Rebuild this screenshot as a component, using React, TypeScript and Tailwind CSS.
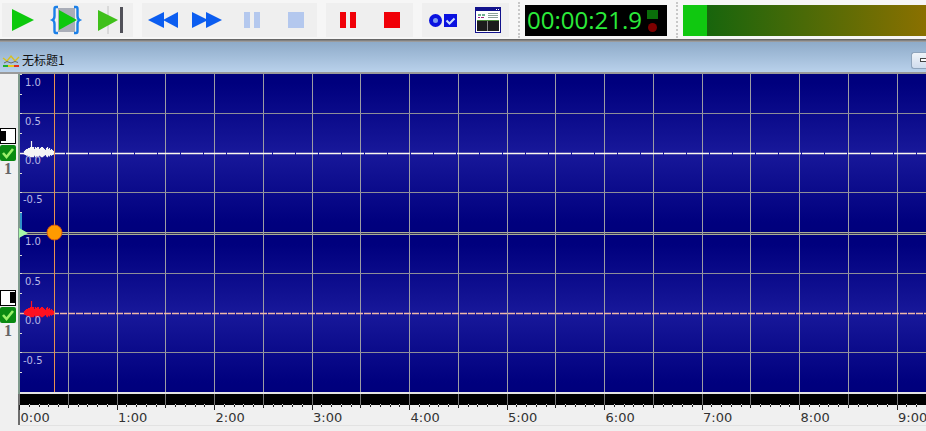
const FONT = '"DejaVu Sans", sans-serif';

const toX = (i: number) => 48.75 * i;
const gridCols = Array.from({ length: 19 }, (_, i) => i + 1);
const rulerTicks = Array.from({ length: 95 }, (_, i) => i);
const minutes = Array.from({ length: 10 }, (_, i) => i);

// rough shape of the short recorded bit at the start of each channel
const peaks = [2, 3, 4, 4, 5, 5, 6, 12, 6, 6, 4, 6, 5, 6, 6, 4, 5, 6, 6, 5, 4, 3, 5, 6, 4, 5, 3, 4, 3, 2];
const wavePath = (mid: number) =>
  peaks.map((p, i) => `M${6.5 + i} ${mid - p}V${mid + Math.min(p, 6) * 0.7}`).join("");

function Group({ children, w }: { children: React.ReactNode; w: string }) {
  return <div className={`h-[34px] bg-[#efefef] flex items-center ${w}`}>{children}</div>;
}

function Dots() {
  return <div className="h-[36px] w-0 border-l-2 border-dotted border-[#c8c8c8]" />;
}

function Icon({ w, children }: { w: number; children: React.ReactNode }) {
  return (
    <svg width={w} height={34} viewBox={`0 0 ${w} 34`} className="shrink-0">
      {children}
    </svg>
  );
}

function ChannelSide({ flip }: { flip?: boolean }) {
  return (
    <div className={`h-[160px] flex flex-col items-start gap-px ${flip ? "pt-[56px]" : "pt-[54px]"}`}>
      <div className="w-[16px] h-[16px] bg-white border border-black flex">
        {flip ? <div className="ml-auto w-[5px] h-[11px] mt-px bg-black" /> : <div className="w-[5px] h-[10px] mt-[2px] bg-black" />}
      </div>
      <svg width={16} height={16} viewBox="0 0 16 16">
        <rect width={16} height={16} rx={2} fill="#0a8a12" />
        <path d="M3 8l3.5 4L13 4" fill="none" stroke="#9cf06a" strokeWidth={2.6} />
      </svg>
      <div className="w-[16px] text-center text-[16px] leading-[14px] font-bold text-[#666]" style={{ fontFamily: '"Liberation Serif", serif' }}>
        1
      </div>
    </div>
  );
}

export default function App() {
  return (
    <div className="w-[926px] h-[431px] overflow-hidden bg-[#f0f0f0] flex flex-col" style={{ fontFamily: FONT }}>
      {/* toolbar */}
      <div className="h-[39px] shrink-0 bg-[#f6f6f6] flex items-center pl-[2px] pt-[1px] gap-[9px]">
        <Group w="w-[131px]">
          <Icon w={46}>
            <path d="M10 6L32 17L10 28Z" fill="#0dc90d" />
          </Icon>
          <Icon w={42}>
            <rect x={10} y={5} width={17} height={24} fill="#a9adb8" />
            <path d="M10 4H8Q6.500 4 6.500 6V13Q6.500 16 4.500 17Q6.500 18 6.500 21V28Q6.500 30 8 30H10M26 4H28Q29.500 4 29.500 6V13Q29.500 16 31.500 17Q29.500 18 29.500 21V28Q29.500 30 28 30H26" fill="none" stroke="#1a7fe8" strokeWidth={2.4} />
            <path d="M11 7L29 17L11 27Z" fill="#0dc90d" />
          </Icon>
          <Icon w={43}>
            <path d="M18 3V31" stroke="#c4c4c4" strokeWidth={1} />
            <path d="M8 7L28 17L8 28Z" fill="#3fc01a" />
            <rect x={30} y={4} width={3} height={26} fill="#505058" />
          </Icon>
        </Group>
        <Group w="w-[175px]">
          <Icon w={44}>
            <path d="M6 17L22 9V25ZM21 17L36 9V25Z" fill="#0b5df0" />
          </Icon>
          <Icon w={44}>
            <path d="M6 9L22 17L6 25ZM20 9L36 17L20 25Z" fill="#0b5df0" />
          </Icon>
          <Icon w={44}>
            <path d="M14 9h6v16h-6zM24 9h6v16h-6z" fill="#b4c8ee" />
          </Icon>
          <Icon w={43}>
            <rect x={14} y={9} width={16} height={16} fill="#b4c8ee" />
          </Icon>
        </Group>
        <Group w="w-[87px]">
          <Icon w={44}>
            <path d="M14 9h6v16h-6zM24 9h6v16h-6z" fill="#f00008" />
          </Icon>
          <Icon w={43}>
            <rect x={14} y={9} width={16} height={16} fill="#f00008" />
          </Icon>
        </Group>
        <Group w="w-[87px]">
          <Icon w={37}>
            <circle cx={13.5} cy={17.5} r={6.5} fill="#0a12e0" />
            <circle cx={13.5} cy={17.5} r={2.5} fill="#7d9cf0" />
            <rect x={22} y={11} width={13} height={13} fill="#0a12e0" />
            <path d="M24.5 17.5l3 3l5-5" fill="none" stroke="#cfe0ff" strokeWidth={2} />
          </Icon>
          <Icon w={48}>
            <rect x={16.5} y={4.5} width={25} height={25} fill="#fff" stroke="#12128c" />
            <rect x={17} y={5} width={24} height={3} fill="#12128c" />
            <path d="M39 6h1v1h-1zM37 6h1v1h-1z" fill="#fff" />
            <path d="M19 11h3v2h-3zM23 11h3v2h-3z" fill="#70b090" />
            <path d="M19 14h2v1h-2zM22 14h3v1h-3z" fill="#a02080" />
            <path d="M29 10h10v1H29zM29 12h10v1H29zM29 14h10v1H29z" fill="#8aa098" />
            <rect x={18} y={18} width={22} height={10} fill="#1c1c1c" />
            <rect x={18} y={17} width={22} height={1} fill="#4a8a3a" />
            <rect x={28} y={18} width={1} height={10} fill="#888" />
          </Icon>
        </Group>
        <Dots />
        <div className="-ml-[4px] w-[142px] h-[31px] bg-black flex items-center pl-[2px]">
          <span className="w-[120px] text-[24px] leading-none text-[#2bea3a] whitespace-nowrap" style={{ fontFamily: '"Open Sans", sans-serif' }}>
            00:00:21.9
          </span>
          <div className="flex flex-col items-center gap-[4px] pt-[1px]">
            <div className="w-[11px] h-[9px] bg-[#0a6e0a]" />
            <div className="w-[9px] h-[9px] rounded-full bg-[#7e0000]" />
          </div>
        </div>
        <Dots />
        <div className="flex-1 h-[31px] flex -ml-[4px] bg-[linear-gradient(90deg,#0b640e,#8a7000)]">
          <div className="w-[24px] bg-[#10c810]" />
        </div>
      </div>
      <div className="h-[3px] shrink-0 bg-[linear-gradient(180deg,#5a5a5a,#a8a8a8)]" />

      {/* document title */}
      <div className="h-[32px] shrink-0 bg-[linear-gradient(180deg,#8eabc9,#b9d1eb)] border-b-2 border-[#9a9a9a] flex items-center pl-[2px] pt-[6px] gap-[2px]">
        <svg width={18} height={14} viewBox="0 0 18 14">
          <path d="M1 5l4 3l4-5l4 5l4-4" fill="none" stroke="#d8c020" strokeWidth={1.4} />
          <path d="M2 10l3-1.500l4 1.500l4-1.500l3 1" fill="none" stroke="#666" strokeWidth={1} />
          <rect x={1} y={12} width={5} height={2} fill="#20b030" />
          <rect x={6} y={12} width={6} height={2} fill="#e8c820" />
          <rect x={12} y={12} width={5} height={2} fill="#e03020" />
        </svg>
        <span className="text-[12px] leading-[16px] text-[#111]" style={{ fontFamily: '"Noto Sans CJK SC", sans-serif' }}>
          无标题1
        </span>
        <div className="ml-auto w-[15px] h-[17px] overflow-hidden rounded-l-[3px] border border-r-0 border-[#8ea4bc] bg-[linear-gradient(180deg,#f0f4f9,#cfdced)] flex items-center pl-[8px]">
          <div className="w-[13px] h-[4px] shrink-0 border border-[#444] bg-white" />
        </div>
      </div>

      {/* channels */}
      <div className="h-[320px] shrink-0 flex">
        <div className="w-[18px] shrink-0 flex flex-col">
          <ChannelSide />
          <ChannelSide flip />
        </div>
        <svg width={908} height={320} viewBox="0 0 908 320" className="shrink-0" style={{ fontFamily: FONT }}>
          <defs>
            <linearGradient id="chan" x1="0" y1="0" x2="0" y2="1">
              <stop offset="0" stopColor="#00007c" />
              <stop offset="0.06" stopColor="#00007e" />
              <stop offset="0.5" stopColor="#18189a" />
              <stop offset="0.94" stopColor="#00007e" />
              <stop offset="1" stopColor="#00007c" />
            </linearGradient>
          </defs>
          <rect x={0} y={0} width={2} height={320} fill="#7f9a8c" />
          <rect x={2} y={0} width={906} height={158} fill="url(#chan)" />
          <rect x={2} y={161} width={906} height={157} fill="url(#chan)" />
          <rect x={2} y={318} width={906} height={2} fill="#e4e4e4" />
          <rect x={2} y={158} width={906} height={1} fill="#a9ab98" />
          <rect x={2} y={159} width={906} height={1} fill="#30305e" />
          <rect x={2} y={160} width={906} height={1} fill="#a9ab98" />

          {gridCols.map((i) => (
            <path key={i} d={`M${Math.round(toX(i)) + 1.5} 0V318`} stroke="#9c9ca4" strokeWidth={1} />
          ))}
          {[39, 118, 199, 278].map((y) => (
            <path key={y} d={`M2 ${y + 0.5}H908`} stroke="#8e8e98" strokeWidth={1} />
          ))}
          {[0, 20, 39, 59, 79, 99, 118, 138, 161, 181, 199, 219, 239, 259, 278, 298].map((y) => (
            <path key={y} d={`M2 ${y + 0.5}H4`} stroke="#ddd" strokeWidth={1} />
          ))}

          <path d="M2 79.500H908" stroke="#fbf8ee" strokeWidth={1.5} strokeDasharray="22 1" />
          <path d="M2 239.500H908" stroke="#f0b8a8" strokeWidth={1.5} strokeDasharray="7 1" />
          <path d={wavePath(79)} stroke="#f4f4f4" strokeWidth={1.2} />
          <path d={wavePath(239)} stroke="#ff1020" strokeWidth={1.2} />

          {[
            ["1.0", 12],
            ["0.5", 51],
            ["0.0", 90],
            ["-0.5", 129],
            ["1.0", 171],
            ["0.5", 211],
            ["0.0", 250],
            ["-0.5", 290],
          ].map(([label, y], i) => (
            <text key={i} x={label === "-0.5" ? 5 : 7} y={y} fontSize={10} fill="#b8b8e6">
              {label}
            </text>
          ))}

          <rect x={2} y={139} width={2} height={19} fill="#2f90c8" />
          <path d="M1 154L10 159L1 164Z" fill="#a8f8a8" />
          <path d="M36.500 0V318" stroke="#e89050" strokeWidth={1} />
          <circle cx={36.5} cy={158.5} r={7.5} fill="#ff9a00" stroke="#d85a10" strokeWidth={1} />
        </svg>
      </div>

      {/* time ruler */}
      <svg width={926} height={37} viewBox="0 0 926 37" className="shrink-0" style={{ fontFamily: FONT }}>
        <rect x={18} y={0} width={2} height={31} fill="#6d6d6d" />
        <rect x={20} y={0} width={906} height={11} fill="#000" />
        {rulerTicks.map((i) => {
          const x = Math.round(19 + i * 9.75) + 0.5;
          const major = i % 5 === 0;
          const end = i % 10 === 0 ? 16 : major ? 14 : 13;
          return (
            <g key={i}>
              {major ? <path d={`M${x} 0V11`} stroke="#777" strokeWidth={1} /> : <path d={`M${x} 10V11`} stroke="#ddd" strokeWidth={1} />}
              <path d={`M${x} 11V${end}`} stroke="#222" strokeWidth={1} />
            </g>
          );
        })}
        {minutes.map((m) => (
          <text key={m} x={20.5 + m * 97.5} y={28} fontSize={13} fill="#333">
            {m}:00
          </text>
        ))}
        <rect x={20} y={31} width={906} height={1} fill="#e2e2e2" />
      </svg>
    </div>
  );
}
